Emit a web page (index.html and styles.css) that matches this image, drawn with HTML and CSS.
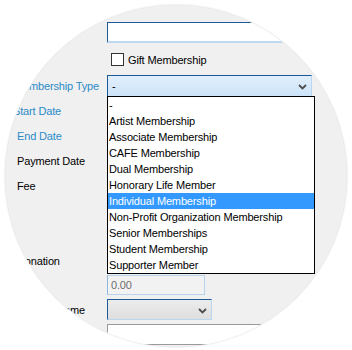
FILE: index.html
```html
<!DOCTYPE html>
<html>
<head>
<meta charset="utf-8">
<link rel="stylesheet" href="styles.css">
</head>
<body>
<div class="disc">
  <div class="form">
    <div class="row">
      <span class="label">Name</span>
      <div class="textbox focus wide"></div>
    </div>
    <div class="row gift">
      <span class="label"></span>
      <label class="check"><span class="box"></span>Gift Membership</label>
    </div>
    <div class="row">
      <span class="label blue shift-sm">Membership Type</span>
      <div class="field">
        <div class="combo hot"><span class="value">-</span>
          <svg class="chev" width="9" height="6" viewBox="0 0 9 6"><path d="M1 1 L4.5 4.5 L8 1" fill="none" stroke="#4d4d4d" stroke-width="1.8"/></svg>
        </div>
        <ul class="dropdown">
          <li>-</li>
          <li>Artist Membership</li>
          <li>Associate Membership</li>
          <li>CAFE Membership</li>
          <li>Dual Membership</li>
          <li>Honorary Life Member</li>
          <li class="sel">Individual Membership</li>
          <li>Non-Profit Organization Membership</li>
          <li>Senior Memberships</li>
          <li>Student Membership</li>
          <li>Supporter Member</li>
        </ul>
      </div>
    </div>
    <div class="row"><span class="label blue shift">Start Date</span><div class="textbox small"></div></div>
    <div class="row"><span class="label blue">End Date</span><div class="textbox small"></div></div>
    <div class="row"><span class="label">Payment Date</span><div class="textbox small"></div></div>
    <div class="row"><span class="label">Fee</span><div class="textbox small"></div></div>
    <div class="row"><span class="label"></span><div class="textbox small"></div></div>
    <div class="row"><span class="label"></span><div class="textbox small"></div></div>
    <div class="row"><span class="label">Donation</span><div class="textbox small"></div></div>
    <div class="row amount"><span class="label"></span><div class="textbox disabled">0.00</div></div>
    <div class="row"><span class="label">Receipt Name</span>
      <div class="combo grey"><span class="value"></span>
        <svg class="chev" width="9" height="6" viewBox="0 0 9 6"><path d="M1 1 L4.5 4.5 L8 1" fill="none" stroke="#4d4d4d" stroke-width="1.8"/></svg>
      </div>
    </div>
    <div class="row"><span class="label"></span><div class="textbox plain"></div></div>
  </div>
</div>
</body>
</html>
```
FILE: styles.css
```css
html, body {
  margin: 0;
  padding: 0;
  background: #ffffff;
}
body {
  width: 352px;
  height: 350px;
  overflow: hidden;
  font-family: "Liberation Sans", Arial, sans-serif;
  font-size: 11px;
  letter-spacing: -0.15px;
  color: #000;
}
.disc {
  width: 342px;
  height: 342px;
  margin: 5px 0 0 5px;
  border-radius: 50%;
  background: #f0f0f0;
  overflow: hidden;
  box-shadow: 0 0 2px rgba(0, 0, 0, 0.2);
  position: relative;
}
.form {
  display: flex;
  flex-direction: column;
  gap: 4px;
  padding: 17px 0 0 12px;
}
.row {
  display: flex;
  align-items: center;
  height: 21px;
  flex: none;
}
.row.gift { height: 24px; }
.row.amount { height: 20px; }
.label {
  width: 90px;
  flex: none;
  white-space: nowrap;
}
.label.blue { color: #2a8bc9; }
.label.shift { margin-left: -4px; width: 94px; }
.label.shift-sm { margin-left: -3px; width: 93px; }
.field {
  position: relative;
  height: 21px;
}
.textbox {
  box-sizing: border-box;
  height: 21px;
  background: #fff;
  border: 1px solid #abadb3;
}
.textbox.focus {
  width: 230px;
  border-top: 1px solid #1b5a96;
  border-left: 1px solid #1b5a96;
  border-right: 1px solid #b8d6f1;
  border-bottom: 2px solid #bcd7f0;
}
.textbox.small { width: 120px; }
.textbox.disabled {
  width: 98px;
  height: 20px;
  background: #f2f2f2;
  border: 1px solid #b7d3ee;
  border-left-color: #8fb8e0;
  color: #6d6d6d;
  padding: 3px 0 0 3px;
  line-height: 12px;
}
.textbox.plain {
  width: 210px;
  border: 1px solid #9a9a9a;
  border-right-color: #c9c9c9;
}
.check {
  display: flex;
  align-items: center;
  gap: 4px;
  padding-left: 4px;
  margin-top: 1px;
}
.box {
  width: 11px;
  height: 11px;
  background: #fff;
  border: 1px solid #333;
}
.combo {
  box-sizing: border-box;
  height: 21px;
  display: flex;
  align-items: center;
  justify-content: space-between;
  padding: 0 4px 0 4px;
}
.combo.hot {
  width: 205px;
  background: linear-gradient(#e2effc, #cce3f8);
  border-top: 1px solid #1b5a96;
  border-left: 1px solid #1b5a96;
  border-right: 1px solid #b9d7f2;
}
.combo.grey {
  width: 105px;
  background: linear-gradient(#ececec, #dedede);
  border-top: 1px solid #1b5a96;
  border-left: 1px solid #1b5a96;
  border-right: 1px solid #b9d7f2;
  border-bottom: 1px solid #b9d7f2;
}
.chev { margin-top: 2px; }
.dropdown {
  position: absolute;
  top: 21px;
  left: 0;
  z-index: 5;
  box-sizing: border-box;
  width: 208px;
  margin: 0;
  padding: 0;
  list-style: none;
  background: #fff;
  border: 1px solid #000;
}
.dropdown li {
  height: 16px;
  line-height: 16px;
  padding-left: 1px;
  white-space: nowrap;
}
.dropdown li.sel {
  background: #3399ff;
  color: #fff;
}
```
